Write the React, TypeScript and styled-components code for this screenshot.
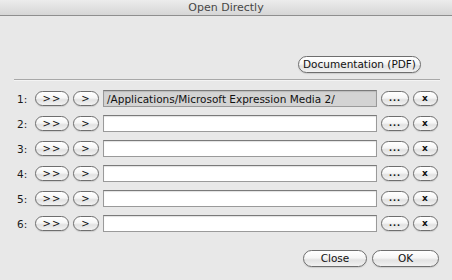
import React from 'react'
import styled, { createGlobalStyle } from 'styled-components'

const GlobalStyle = createGlobalStyle`
  html, body {
    margin: 0;
    padding: 0;
    background: #e8e8e8;
  }
  body {
    font-family: "DejaVu Sans", "Liberation Sans", sans-serif;
  }
`

const Window = styled.div`
  width: 452px;
  height: 280px;
  background: #e8e8e8;
  display: flex;
  flex-direction: column;
  overflow: hidden;
`

const TitleBar = styled.div`
  height: 15px;
  display: flex;
  align-items: center;
  justify-content: center;
  background: linear-gradient(#ececec, #d6d6d6);
  border-bottom: 1px solid #8e8e8e;
  font-size: 11px;
  color: #474747;
`

const Body = styled.div`
  display: flex;
  flex-direction: column;
  padding: 0 12px 0 14px;
`

const TopBar = styled.div`
  display: flex;
  justify-content: flex-end;
  padding: 40px 19px 0 0;
`

const Separator = styled.hr`
  margin: 6px 0 9px 0;
  border: none;
  border-top: 1px solid #a8a8a8;
  border-bottom: 1px solid #f4f4f4;
  height: 0;
`

const Rows = styled.div`
  display: flex;
  flex-direction: column;
  gap: 8px;
`

const Row = styled.div`
  display: grid;
  grid-template-columns: 17px 34px 26px 274px 28px 25px;
  column-gap: 4px;
  align-items: center;
  height: 17px;
`

const Label = styled.span`
  font-size: 10.5px;
  color: #1a1a1a;
  padding-left: 3px;
`

const PillButton = styled.button<{ $w?: number; $h?: number }>`
  height: ${({ $h }) => $h ?? 16}px;
  ${({ $w }) => ($w ? `width: ${$w}px;` : '')}
  padding: 0;
  border: 1px solid #6e6e6e;
  border-radius: 9px;
  background: linear-gradient(#ffffff 0%, #f6f6f6 45%, #e2e2e2 60%, #f2f2f2 100%);
  box-shadow: 0 1px 1px rgba(0, 0, 0, 0.12);
  font-family: "DejaVu Sans", "Liberation Sans", sans-serif;
  font-size: 10.5px;
  color: #111;
  display: flex;
  align-items: center;
  justify-content: center;
  line-height: 1;
`

const Glyph = styled.span<{ $bold?: boolean; $size?: number }>`
  font-size: ${({ $size }) => $size ?? 10}px;
  font-weight: ${({ $bold }) => ($bold ? 'bold' : 'normal')};
  letter-spacing: 1px;
`

const PathField = styled.div<{ $filled?: boolean }>`
  height: 17px;
  box-sizing: border-box;
  border: 1px solid #9a9a9a;
  border-top-color: #7a7a7a;
  background: ${({ $filled }) => ($filled ? '#d3d3d3' : '#ffffff')};
  box-shadow: inset 0 1px 1px rgba(0, 0, 0, 0.12);
  font-size: 10.5px;
  color: #111;
  padding-left: 3px;
  display: flex;
  align-items: center;
  white-space: nowrap;
  overflow: hidden;
`

const Footer = styled.div`
  display: flex;
  justify-content: flex-end;
  gap: 5px;
  padding: 18px 1px 0 0;
`

const paths = ['/Applications/Microsoft Expression Media 2/', '', '', '', '', '']

export default function App() {
  return (
    <>
      <GlobalStyle />
      <Window>
        <TitleBar>Open Directly</TitleBar>
        <Body>
          <TopBar>
            <PillButton $w={123} $h={17}>Documentation (PDF)</PillButton>
          </TopBar>
          <Separator />
          <Rows>
            {paths.map((p, i) => (
              <Row key={i}>
                <Label>{i + 1}:</Label>
                <PillButton $h={15}>
                  <Glyph>&gt;&gt;</Glyph>
                </PillButton>
                <PillButton $h={15}>
                  <Glyph>&gt;</Glyph>
                </PillButton>
                <PathField $filled={!!p}>{p}</PathField>
                <PillButton $h={15}>
                  <Glyph $size={8} $bold>...</Glyph>
                </PillButton>
                <PillButton $h={15}>
                  <Glyph $size={9} $bold>x</Glyph>
                </PillButton>
              </Row>
            ))}
          </Rows>
          <Footer>
            <PillButton $w={64} $h={17}>Close</PillButton>
            <PillButton $w={67} $h={17}>OK</PillButton>
          </Footer>
        </Body>
      </Window>
    </>
  )
}
